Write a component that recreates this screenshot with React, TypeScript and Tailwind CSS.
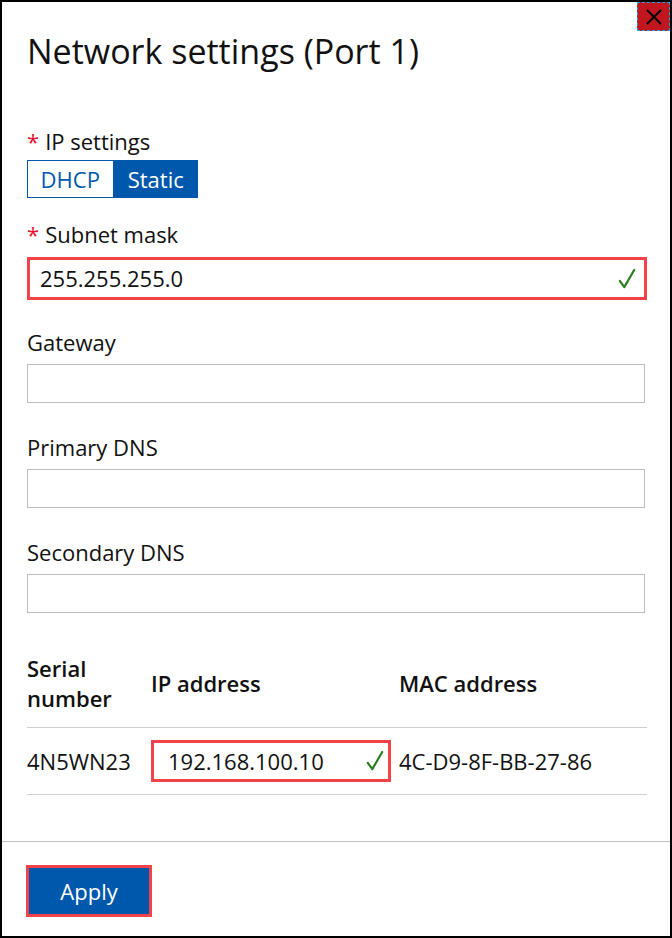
import React from "react";

const Check = ({ className = "" }: { className?: string }) => (
  <svg viewBox="0 0 20 24" className={className} width="18" height="22">
    <path d="M2 14 L7 21 L18 2" fill="none" stroke="#2a7d1e" strokeWidth="2.4" strokeLinecap="round" strokeLinejoin="round" />
  </svg>
);

const Label = ({ children, req = false }: { children: React.ReactNode; req?: boolean }) => (
  <div className="text-[22px] leading-[28px] text-[#111]">
    {req && <span className="text-[#e8112d] mr-[6px]">*</span>}
    {children}
  </div>
);

const EmptyInput = () => (
  <div className="mt-[8px] h-[39px] w-[618px] border border-[#bdbdbd] bg-white" />
);

export default function App() {
  return (
    <div
      className="relative w-[672px] h-[938px] border-2 border-black bg-white flex flex-col text-[#111]"
      style={{ fontFamily: '"Open Sans", "Noto Sans", sans-serif' }}
    >
      <div className="absolute top-0 right-0 w-[33px] h-[29px] bg-[#c1161d] border border-dashed border-[#1aa3e8] flex items-center justify-center">
        <svg width="18" height="18" viewBox="0 0 18 18">
          <path d="M2 2 L16 16 M16 2 L2 16" stroke="#000" strokeWidth="2" />
        </svg>
      </div>

      <div className="flex-1 px-[25px]">
        <h1 className="mt-[25px] text-[34px] leading-[48px] font-normal">Network settings (Port 1)</h1>

        <div className="mt-[52px]">
          <Label req>IP settings</Label>
          <div className="mt-[5px] flex h-[38px] w-[171px]">
            <div className="flex-1 border border-[#0058ad] text-[#0058ad] text-[22px] flex items-center justify-center">DHCP</div>
            <div className="flex-1 bg-[#0058ad] text-white text-[22px] flex items-center justify-center">Static</div>
          </div>
        </div>

        <div className="mt-[22px]">
          <Label req>Subnet mask</Label>
          <div className="mt-[9px] h-[43px] w-[620px] border-[3px] border-[#f0444a] flex items-center justify-between pl-[10px] pr-[8px]">
            <span className="text-[22px]">255.255.255.0</span>
            <Check />
          </div>
        </div>

        <div className="mt-[28px]">
          <Label>Gateway</Label>
          <EmptyInput />
        </div>
        <div className="mt-[30px]">
          <Label>Primary DNS</Label>
          <EmptyInput />
        </div>
        <div className="mt-[30px]">
          <Label>Secondary DNS</Label>
          <EmptyInput />
        </div>

        <div className="mt-[40px] w-[620px]">
          <div className="flex items-center border-b border-[#d0d0d0] pb-[14px] text-[22px] leading-[30px] font-semibold">
            <div className="w-[124px]">Serial<br />number</div>
            <div className="w-[248px]">IP address</div>
            <div>MAC address</div>
          </div>
          <div className="flex items-center h-[67px] border-b border-[#d0d0d0] text-[22px]">
            <div className="w-[124px]">4N5WN23</div>
            <div className="w-[248px]">
              <div className="w-[240px] h-[42px] border-[3px] border-[#f0444a] flex items-center justify-between pl-[14px] pr-[4px]">
                <span>192.168.100.10</span>
                <Check />
              </div>
            </div>
            <div>4C-D9-8F-BB-27-86</div>
          </div>
        </div>
      </div>

      <div className="h-[95px] border-t border-[#c0c0c0] px-[24px] pt-[23px]">
        <div className="w-[126px] h-[52px] border-[3px] border-[#f0444a] bg-[#0058ad] text-white text-[22px] flex items-center justify-center">
          Apply
        </div>
      </div>
    </div>
  );
}
